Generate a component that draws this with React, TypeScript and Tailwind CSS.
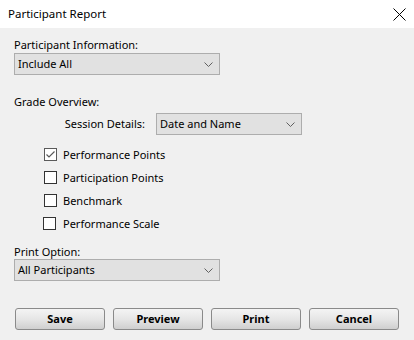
import { useState } from 'react';

const font = { fontFamily: '"Noto Sans", "Open Sans", sans-serif' };

function Chevron() {
  return (
    <svg width="9" height="5" viewBox="0 0 9 5" className="shrink-0">
      <path d="M0.5 0.5 L4.5 4.5 L8.5 0.5" fill="none" stroke="#606060" strokeWidth="1" />
    </svg>
  );
}

function Select({ value, className }: { value: string; className: string }) {
  return (
    <div
      className={`flex h-[22px] items-center justify-between border border-[#adadad] bg-[#e1e1e1] pl-[3px] pr-[6px] text-[11px] text-black ${className}`}
    >
      <span>{value}</span>
      <Chevron />
    </div>
  );
}

function Check({ label, checked, shift }: { label: string; checked?: boolean; shift?: boolean }) {
  return (
    <div className={`flex h-[23px] items-center ${shift ? 'pl-[29px]' : 'pl-[30px]'}`}>
      <div
        className={`flex h-[13px] w-[13px] items-center justify-center bg-white border ${
          checked ? 'border-[#5a5a5a]' : 'border-[#333333]'
        }`}
      >
        {checked && (
          <svg width="11" height="11" viewBox="0 0 11 11">
            <path d="M1.5 5.5 L4 8 L9.5 2.5" fill="none" stroke="#5a5a5a" strokeWidth="1.2" />
          </svg>
        )}
      </div>
      <span className={`text-[11px] ${shift ? 'ml-[7px]' : 'ml-[6px]'}`}>{label}</span>
    </div>
  );
}

function Btn({ label }: { label: string }) {
  return (
    <button className="h-[22px] w-[90px] rounded-[3px] border border-[#8a8a8a] bg-gradient-to-b from-[#f4f4f4] via-[#e6e6e6] to-[#cfcfcf] text-[11px] font-bold text-black">
      {label}
    </button>
  );
}

export default function App() {
  const [open] = useState(true);
  if (!open) return null;

  return (
    <div className="h-[340px] w-[414px] overflow-hidden bg-[#f0f0f0] text-black" style={font}>
      {/* title bar */}
      <div className="flex h-[28px] items-center justify-between bg-white pl-[8px] pr-[8px]">
        <span className="text-[11.5px]">Participant Report</span>
        <svg width="13" height="13" viewBox="0 0 13 13">
          <path d="M0.5 0.5 L12.5 12.5 M12.5 0.5 L0.5 12.5" stroke="#000" strokeWidth="1" />
        </svg>
      </div>

      <div className="pl-[14px] pt-[9px] text-[11px] leading-[16px]">
        <div>Participant Information:</div>
        <Select value="Include All" className="w-[206px]" />

        <div className="mt-[19px]">Grade Overview:</div>
        <div className="mt-[3px] flex items-center">
          <span className="w-[132px] whitespace-nowrap pr-[1px] text-right">Session Details:</span>
          <Select value="Date and Name" className="ml-[10px] w-[146px]" />
        </div>

        <div className="mt-[8px]">
          <Check label="Performance Points" checked />
          <Check label="Participation Points" />
          <Check label="Benchmark" />
          <Check label="Performance Scale" shift />
        </div>

        <div className="mt-[9px]">Print Option:</div>
        <Select value="All Participants" className="-mt-[1px] w-[206px]" />

        <div className="mt-[27px] flex gap-[8px] pl-[1px]">
          <Btn label="Save" />
          <Btn label="Preview" />
          <Btn label="Print" />
          <Btn label="Cancel" />
        </div>
      </div>
    </div>
  );
}
